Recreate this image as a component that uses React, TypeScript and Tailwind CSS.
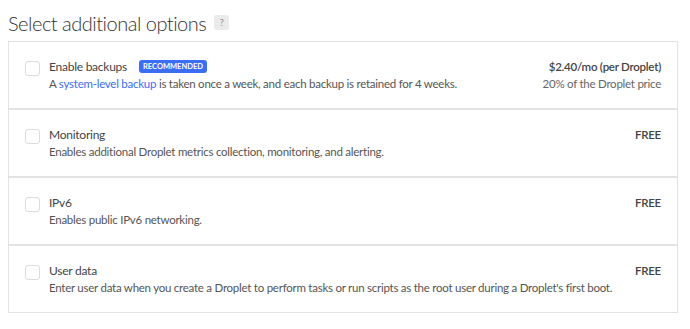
const OPTIONS = [
  {
    id: 'backups',
    title: 'Enable backups',
    badge: 'RECOMMENDED',
    desc: (
      <>
        A <a className="text-[#3b6ef0]">system-level backup</a> is taken once a week, and each backup is retained
        for 4 weeks.
      </>
    ),
    price: '$2.40/mo (per Droplet)',
    sub: '20% of the Droplet price',
  },
  {
    id: 'monitoring',
    title: 'Monitoring',
    desc: 'Enables additional Droplet metrics collection, monitoring, and alerting.',
    price: 'FREE',
  },
  {
    id: 'ipv6',
    title: 'IPv6',
    desc: 'Enables public IPv6 networking.',
    price: 'FREE',
  },
  {
    id: 'userdata',
    title: 'User data',
    desc: "Enter user data when you create a Droplet to perform tasks or run scripts as the root user during a Droplet's first boot.",
    price: 'FREE',
  },
];

export default function App() {
  return (
    <div className="h-[329px] w-[690px] bg-white px-2 font-['Lato',sans-serif] text-[#444]">
      <div className="flex h-[41px] items-center gap-[8px] pt-[4px]">
        <h2 className="text-[20px] font-light leading-none tracking-[-0.5px] text-[#333]">
          Select additional options
        </h2>
        <span className="flex h-[15px] w-[15px] items-center justify-center rounded-[2px] bg-[#ebebeb] text-[9px] text-[#888]">
          ?
        </span>
      </div>

      <div className="flex w-[670px] flex-col">
        {OPTIONS.map((o) => (
          <div
            key={o.id}
            className="flex h-[68px] items-start border border-[#e3e3e3] pl-[16px] pr-[16px] pt-[16px]"
          >
            <span className="mt-[3px] h-[15px] w-[15px] shrink-0 rounded-[3px] border border-[#dddddd] bg-white" />
            <div className="ml-[9px] flex-1">
              <div className="flex h-[17px] items-center gap-[12px]">
                <span className="text-[12px] leading-[15px] tracking-[-0.25px] text-[#444]">{o.title}</span>
                {o.badge && (
                  <span className="flex h-[13px] items-center rounded-[3px] bg-[#3b6ef5] px-[4px] text-[7.5px] font-bold leading-none text-white">
                    {o.badge}
                  </span>
                )}
              </div>
              <p className="mt-[1px] text-[11.5px] leading-[15px] tracking-[-0.25px] text-[#555]">{o.desc}</p>
            </div>
            <div className="pt-[1px] text-right">
              <div className="text-[11.5px] font-semibold leading-[15px] tracking-[-0.25px] text-[#444]">{o.price}</div>
              {o.sub && (
                <div className="mt-[2px] text-[11.5px] leading-[15px] tracking-[-0.25px] text-[#666]">{o.sub}</div>
              )}
            </div>
          </div>
        ))}
      </div>
    </div>
  );
}
